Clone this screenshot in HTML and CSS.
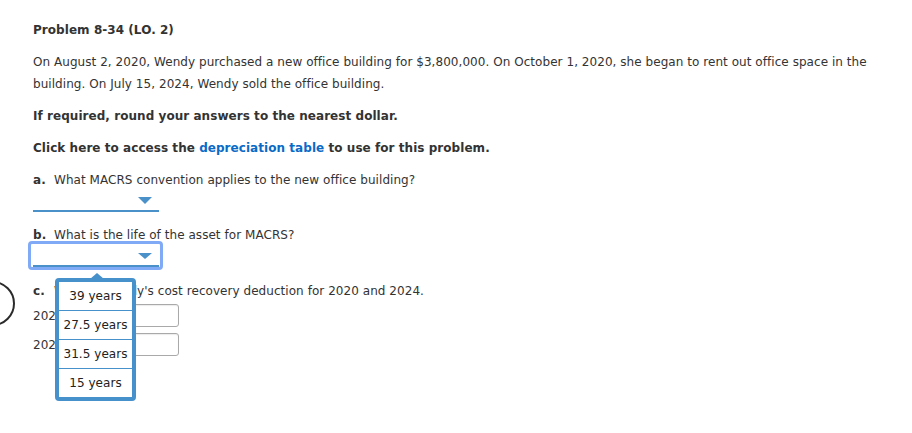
FILE: index.html
```html
<!DOCTYPE html>
<html>
<head>
<meta charset="utf-8">
<link rel="stylesheet" href="styles.css">
</head>
<body>
<div class="ring"></div>
<div class="problem">
  <h1 class="title">Problem 8-34 (LO. 2)</h1>
  <p class="intro">On August 2, 2020, Wendy purchased a new office building for $3,800,000. On October 1, 2020, she began to rent out office space in the building. On July 15, 2024, Wendy sold the office building.</p>
  <p class="strong">If required, round your answers to the nearest dollar.</p>
  <p class="strong">Click here to access the <a class="link" href="#">depreciation table</a> to use for this problem.</p>

  <p class="question"><span class="qlabel">a.</span>What MACRS convention applies to the new office building?</p>
  <div class="select">
    <span class="arrow"></span>
  </div>

  <p class="question q-b"><span class="qlabel">b.</span>What is the life of the asset for MACRS?</p>
  <div class="select-wrap">
    <div class="focus">
      <div class="select select-in">
        <span class="arrow"></span>
      </div>
    </div>
    <div class="popup">
      <span class="caret"></span>
      <ul class="options">
        <li>39 years</li>
        <li>27.5 years</li>
        <li>31.5 years</li>
        <li>15 years</li>
      </ul>
    </div>
  </div>

  <p class="question q-c"><span class="qlabel">c.</span>What is Wendy's cost recovery deduction for 2020 and 2024.</p>
  <div class="row"><span class="year">2020</span><span class="input"></span></div>
  <div class="row"><span class="year">2024</span><span class="input"></span></div>
</div>
</body>
</html>
```
FILE: styles.css
```css
html, body {
  margin: 0;
  padding: 0;
  background: #ffffff;
}
body {
  font-family: "DejaVu Sans", Verdana, sans-serif;
  font-size: 12px;
  letter-spacing: 0.05px;
  color: #333333;
  position: relative;
  overflow: hidden;
  height: 433px;
}
.problem {
  padding: 19px 0 0 33px;
  width: 845px;
}
.title {
  font-size: 12px;
  font-weight: bold;
  line-height: 22px;
  margin: 0 0 10px 0;
}
.intro {
  margin: 0 0 10px 0;
  line-height: 22px;
}
.strong {
  margin: 0 0 10px 0;
  line-height: 22px;
  font-weight: bold;
}
.link {
  color: #0a6bc7;
  text-decoration: none;
}
.question {
  margin: 0;
  line-height: 22px;
}
.qlabel {
  display: inline-block;
  width: 21px;
  font-weight: bold;
}
.select {
  position: relative;
  width: 126px;
  height: 19px;
  border-bottom: 2px solid #4a90c9;
}
.arrow {
  position: absolute;
  right: 7px;
  top: 6px;
  width: 0;
  height: 0;
  border-left: 7px solid transparent;
  border-right: 7px solid transparent;
  border-top: 7px solid #4a90c9;
}
.q-b {
  margin-top: 12px;
}
.select-wrap {
  position: relative;
  width: 135px;
  margin: -5px 0 0 -5px;
}
.focus {
  width: 127px;
  height: 23px;
  padding: 0 0 0 2px;
  border: 3px solid #80a9f6;
  border-radius: 4px;
}
.select-in {
  height: 21px;
}
.select-in .arrow {
  top: 9px;
  border-top-width: 6px;
}
.popup {
  position: absolute;
  left: 27px;
  top: 37px;
  width: 73px;
  border: 4px solid #4690cc;
  border-radius: 4px;
  background: #ffffff;
  z-index: 5;
}
.caret {
  position: absolute;
  left: 31px;
  top: -9px;
  width: 0;
  height: 0;
  border-left: 7px solid transparent;
  border-right: 7px solid transparent;
  border-bottom: 6px solid #4690cc;
}
.options {
  list-style: none;
  margin: 0;
  padding: 0;
}
.options li {
  height: 28px;
  line-height: 28px;
  text-align: center;
  font-size: 12px;
  color: #222222;
  border-top: 1px solid #4690cc;
}
.options li:first-child {
  border-top: none;
}
.q-c {
  margin-top: 10px;
}
.row {
  display: flex;
  align-items: center;
  gap: 6px;
  height: 23px;
  margin-top: 2px;
}
.row + .row {
  margin-top: 6px;
}
.year {
  width: 30px;
}
.input {
  display: inline-block;
  width: 101px;
  height: 21px;
  margin-left: 7px;
  border: 1px solid #a9a9a9;
  border-radius: 3px;
  box-shadow: inset 0 1px 1px rgba(0,0,0,0.08);
}
.ring {
  position: absolute;
  left: -30px;
  top: 281px;
  width: 41px;
  height: 41px;
  border: 2.5px solid #2b2b2b;
  border-radius: 50%;
}
```
